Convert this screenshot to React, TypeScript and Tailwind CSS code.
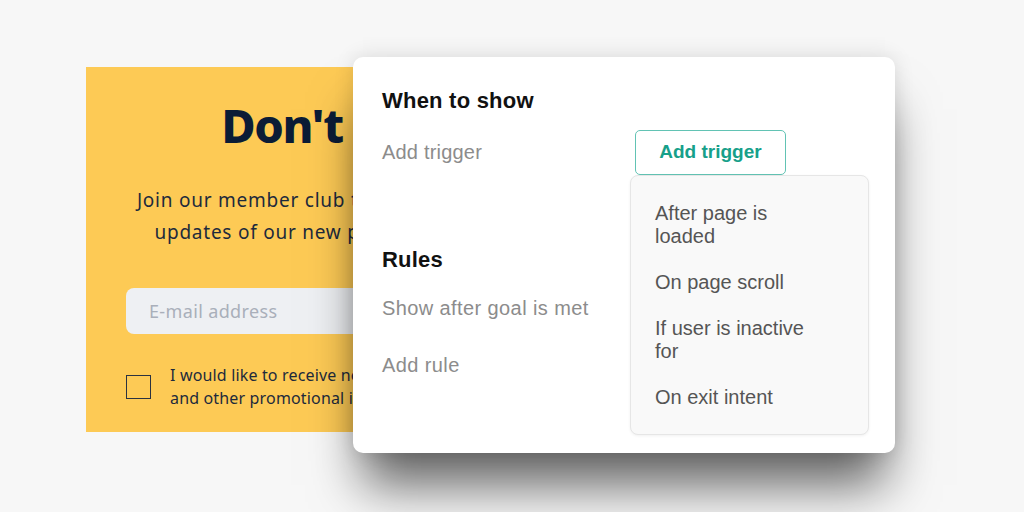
import React from "react";

const triggers = ["After page is loaded", "On page scroll", "If user is inactive for", "On exit intent"];

function SignupPopup() {
  return (
    <div className="flex h-[365px] w-[606px] flex-col items-center bg-[#fdca55] px-[40px] text-center text-[#0b1c36] [font-family:'Noto_Sans',sans-serif]">
      <h2 className="mt-[30px] text-[47px] font-extrabold leading-[56px] tracking-[-0.03em]">Don&apos;t miss out!</h2>
      <p className="mt-[31px] whitespace-nowrap text-[19px] leading-[32px] tracking-[0.04em] text-[#1e2a3c]">
        Join our member club to get exclusive discounts and
        <br />
        updates of our new products and so much more!
      </p>
      <div className="mt-[40px] flex h-[46px] w-full items-center rounded-[8px] bg-[#eef0f3] px-[23px] text-[18px] tracking-[0.02em] text-[#a9afba]">
        E-mail address
      </div>
      <div className="mt-[30px] flex w-full items-center gap-[19px] text-left">
        <div className="h-[24px] w-[25px] shrink-0 border-[1.5px] border-[#2a3240]" />
        <p className="text-[16px] leading-[23px] tracking-[0.01em] text-[#1e2a3c]">
          I would like to receive news, special offers
          <br />
          and other promotional information
        </p>
      </div>
    </div>
  );
}

function SettingsCard() {
  return (
    <div className="absolute left-[353px] top-[57px] h-[396px] w-[542px] rounded-[10px] bg-white pl-[29px] pt-[31px] shadow-[0_42px_48px_-10px_rgba(0,0,0,0.6),0_0_20px_rgba(0,0,0,0.12)] [font-family:'Liberation_Sans',Arial,sans-serif]">
      <h3 className="text-[22px] font-semibold leading-[26px] tracking-[0.01em] text-[#111]">When to show</h3>
      <div className="mt-[16px] flex items-center">
        <span className="w-[253px] text-[20px] leading-[23px] tracking-[0.01em] text-[#8c8c8c]">Add trigger</span>
        <div className="relative">
          <button className="h-[45px] w-[151px] rounded-[5px] border border-[#62c3b4] bg-white text-[19px] font-semibold text-[#17a08a]">
            Add trigger
          </button>
          <div className="absolute left-[-5px] top-[45px] z-10 w-[239px] rounded-[8px] border border-[#e6e6e6] bg-[#f9f9f9] pb-[25px] pl-[24px] pt-[26px] shadow-[0_1px_3px_rgba(0,0,0,0.06)]">
            <ul className="flex w-[160px] flex-col gap-[23px] text-[20px] leading-[23px] text-[#555]">
              {triggers.map((t) => (
                <li key={t}>{t}</li>
              ))}
            </ul>
          </div>
        </div>
      </div>
      <h3 className="mt-[72px] text-[22px] font-semibold leading-[26px] tracking-[0.01em] text-[#111]">Rules</h3>
      <p className="mt-[24px] text-[20px] leading-[23px] tracking-[0.02em] text-[#8c8c8c]">Show after goal is met</p>
      <p className="mt-[34px] text-[20px] leading-[23px] tracking-[0.02em] text-[#8c8c8c]">Add rule</p>
    </div>
  );
}

export default function App() {
  return (
    <div className="relative h-[512px] w-[1024px] overflow-hidden bg-[#f7f7f7] pl-[86px] pt-[67px]">
      <SignupPopup />
      <SettingsCard />
    </div>
  );
}
